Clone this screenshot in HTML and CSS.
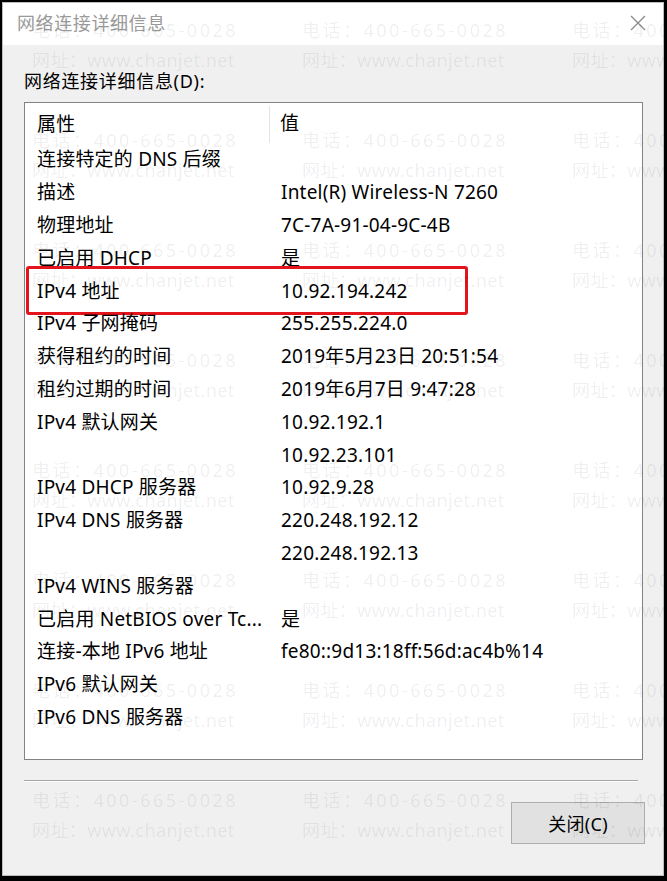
FILE: index.html
```html
<!DOCTYPE html>
<html lang="zh-CN">
<head>
<meta charset="utf-8">
<title>网络连接详细信息</title>
<link rel="stylesheet" href="styles.css">
</head>
<body>
<div class="window">
  <div class="titlebar">
    <span class="title">网络连接详细信息</span>
    <svg class="close" width="16" height="16" viewBox="0 0 16 16"><path d="M1 1 L15 15 M15 1 L1 15" stroke="#8a8a8a" stroke-width="1.3" fill="none"/></svg>
  </div>
  <div class="content">
    <div class="label">网络连接详细信息(D):</div>
    <div class="list">
      <div class="row head"><div class="c1">属性</div><div class="c2">值</div></div>
      <div class="row"><div class="c1">连接特定的 DNS 后缀</div><div class="c2"></div></div>
      <div class="row"><div class="c1">描述</div><div class="c2">Intel(R) Wireless-N 7260</div></div>
      <div class="row"><div class="c1">物理地址</div><div class="c2">7C-7A-91-04-9C-4B</div></div>
      <div class="row"><div class="c1">已启用 DHCP</div><div class="c2">是</div></div>
      <div class="row mark"><div class="c1">IPv4 地址</div><div class="c2">10.92.194.242</div></div>
      <div class="row"><div class="c1">IPv4 子网掩码</div><div class="c2">255.255.224.0</div></div>
      <div class="row"><div class="c1">获得租约的时间</div><div class="c2">2019年5月23日 20:51:54</div></div>
      <div class="row"><div class="c1">租约过期的时间</div><div class="c2">2019年6月7日 9:47:28</div></div>
      <div class="row"><div class="c1">IPv4 默认网关</div><div class="c2">10.92.192.1</div></div>
      <div class="row"><div class="c1"></div><div class="c2">10.92.23.101</div></div>
      <div class="row"><div class="c1">IPv4 DHCP 服务器</div><div class="c2">10.92.9.28</div></div>
      <div class="row"><div class="c1">IPv4 DNS 服务器</div><div class="c2">220.248.192.12</div></div>
      <div class="row"><div class="c1"></div><div class="c2">220.248.192.13</div></div>
      <div class="row"><div class="c1">IPv4 WINS 服务器</div><div class="c2"></div></div>
      <div class="row"><div class="c1">已启用 NetBIOS over Tc...</div><div class="c2">是</div></div>
      <div class="row"><div class="c1">连接-本地 IPv6 地址</div><div class="c2">fe80::9d13:18ff:56d:ac4b%14</div></div>
      <div class="row"><div class="c1">IPv6 默认网关</div><div class="c2"></div></div>
      <div class="row"><div class="c1">IPv6 DNS 服务器</div><div class="c2"></div></div>
    </div>
    <div class="sep"></div>
    <div class="actions"><button class="btn">关闭(C)</button></div>
  </div>
</div>
<div class="watermark">
  <div class="wm"><span class="tel">电话：400-665-0028</span><span class="web">网址：www.chanjet.net</span></div>
  <div class="wm"><span class="tel">电话：400-665-0028</span><span class="web">网址：www.chanjet.net</span></div>
  <div class="wm"><span class="tel">电话：400-665-0028</span><span class="web">网址：www.chanjet.net</span></div>
  <div class="wm"><span class="tel">电话：400-665-0028</span><span class="web">网址：www.chanjet.net</span></div>
  <div class="wm"><span class="tel">电话：400-665-0028</span><span class="web">网址：www.chanjet.net</span></div>
  <div class="wm"><span class="tel">电话：400-665-0028</span><span class="web">网址：www.chanjet.net</span></div>
  <div class="wm"><span class="tel">电话：400-665-0028</span><span class="web">网址：www.chanjet.net</span></div>
  <div class="wm"><span class="tel">电话：400-665-0028</span><span class="web">网址：www.chanjet.net</span></div>
  <div class="wm"><span class="tel">电话：400-665-0028</span><span class="web">网址：www.chanjet.net</span></div>
  <div class="wm"><span class="tel">电话：400-665-0028</span><span class="web">网址：www.chanjet.net</span></div>
  <div class="wm"><span class="tel">电话：400-665-0028</span><span class="web">网址：www.chanjet.net</span></div>
  <div class="wm"><span class="tel">电话：400-665-0028</span><span class="web">网址：www.chanjet.net</span></div>
  <div class="wm"><span class="tel">电话：400-665-0028</span><span class="web">网址：www.chanjet.net</span></div>
  <div class="wm"><span class="tel">电话：400-665-0028</span><span class="web">网址：www.chanjet.net</span></div>
  <div class="wm"><span class="tel">电话：400-665-0028</span><span class="web">网址：www.chanjet.net</span></div>
  <div class="wm"><span class="tel">电话：400-665-0028</span><span class="web">网址：www.chanjet.net</span></div>
  <div class="wm"><span class="tel">电话：400-665-0028</span><span class="web">网址：www.chanjet.net</span></div>
  <div class="wm"><span class="tel">电话：400-665-0028</span><span class="web">网址：www.chanjet.net</span></div>
  <div class="wm"><span class="tel">电话：400-665-0028</span><span class="web">网址：www.chanjet.net</span></div>
  <div class="wm"><span class="tel">电话：400-665-0028</span><span class="web">网址：www.chanjet.net</span></div>
  <div class="wm"><span class="tel">电话：400-665-0028</span><span class="web">网址：www.chanjet.net</span></div>
  <div class="wm"><span class="tel">电话：400-665-0028</span><span class="web">网址：www.chanjet.net</span></div>
  <div class="wm"><span class="tel">电话：400-665-0028</span><span class="web">网址：www.chanjet.net</span></div>
  <div class="wm"><span class="tel">电话：400-665-0028</span><span class="web">网址：www.chanjet.net</span></div>
</div>
</body>
</html>
```
FILE: styles.css
```css
* { box-sizing: border-box; }
html, body { margin: 0; padding: 0; }
body {
  background: #000;
  width: 667px;
  height: 881px;
  overflow: hidden;
  position: relative;
  font-family: "Noto Sans", "Noto Sans CJK SC", sans-serif;
  color: #000;
}
.window {
  margin: 2px 3px 5px 2px;
  height: 874px;
  border: 1px solid #bdbdbd;
  background: #f0f0f0;
  display: flex;
  flex-direction: column;
}
.titlebar {
  height: 42px;
  background: #fff;
  display: flex;
  align-items: center;
  justify-content: space-between;
  padding: 0 17px 2px 14px;
}
.title {
  font-size: 18px;
  letter-spacing: 0.6px;
  color: #9a9a9a;
  line-height: 20px;
}
.close { display: block; }
.content {
  padding: 26px 20px 0 21px;
  display: flex;
  flex-direction: column;
}
.label {
  font-size: 18px;
  letter-spacing: 0.7px;
  line-height: 20px;
  height: 20px;
  margin-bottom: 11px;
}
.list {
  height: 658px;
  border: 1px solid #838383;
  background: #fff;
}
.row {
  display: flex;
  height: 32.8px;
  align-items: center;
  font-size: 19px;
  letter-spacing: 0.2px;
  line-height: 22px;
  white-space: nowrap;
  position: relative;
}
.row.head { height: 40px; }
.c1 { width: 245px; padding-left: 12px; flex: none; }
.c2 { padding-left: 11px; }
.head .c1 { border-right: 1px solid #e3e3e3; height: 37px; line-height: 37px; margin-top: 2px; }
.head .c2 { padding-left: 10px; }
.mark::after {
  content: "";
  position: absolute;
  left: 1px;
  top: -8px;
  width: 436px;
  height: 43px;
  border: 3px solid #e3141c;
  border-radius: 3px;
}
.sep {
  margin: 20px 5px 0 0;
  height: 2px;
  border-top: 1px solid #a5a5a5;
  border-bottom: 1px solid #fdfdfd;
}
.actions {
  display: flex;
  justify-content: flex-end;
  margin: 20px -2px 0 0;
}
.btn {
  width: 134px;
  height: 42px;
  background: #e1e1e1;
  border: 1px solid #adadad;
  font-family: "Noto Sans", "Noto Sans CJK SC", sans-serif;
  font-size: 18px;
  letter-spacing: 0.3px;
  color: #000;
  padding: 0;
}
.watermark {
  position: absolute;
  left: 32px;
  top: 15px;
  display: grid;
  grid-template-columns: repeat(3, 270px);
  grid-auto-rows: 110px;
  pointer-events: none;
}
.wm {
  display: flex;
  flex-direction: column;
  font-size: 18px;
  line-height: 30px;
  color: rgba(0, 0, 0, 0.07);
  white-space: nowrap;
}
.tel { letter-spacing: 2.5px; }
.web { letter-spacing: 0.4px; }
```
